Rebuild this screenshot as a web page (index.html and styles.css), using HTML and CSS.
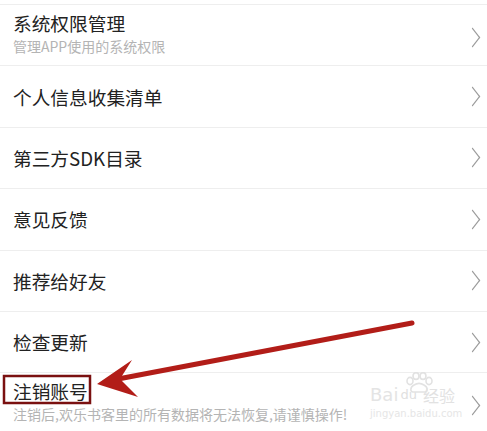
FILE: index.html
```html
<!DOCTYPE html>
<html>
<head>
    <meta charset="UTF-8">
    <title>设置</title>
    <link rel="stylesheet" href="styles.css">
</head>
<body>

<div class="page">

    <ul class="menu">
        <li class="item two">
            <div class="text">
                <p class="title">系统权限管理</p>
                <p class="sub">管理APP使用的系统权限</p>
            </div>
            <span class="arrow"></span>
        </li>
        <li class="item">
            <div class="text"><p class="title">个人信息收集清单</p></div>
            <span class="arrow"></span>
        </li>
        <li class="item">
            <div class="text"><p class="title">第三方SDK目录</p></div>
            <span class="arrow"></span>
        </li>
        <li class="item">
            <div class="text"><p class="title">意见反馈</p></div>
            <span class="arrow"></span>
        </li>
        <li class="item">
            <div class="text"><p class="title">推荐给好友</p></div>
            <span class="arrow"></span>
        </li>
        <li class="item">
            <div class="text"><p class="title">检查更新</p></div>
            <span class="arrow"></span>
        </li>
        <li class="item two last">
            <div class="text">
                <p class="title">注销账号</p>
                <p class="sub">注销后,欢乐书客里的所有数据将无法恢复,请谨慎操作!</p>
            </div>
            <span class="arrow"></span>
        </li>
    </ul>

    <!-- 水印 -->
    <div class="mark">
        <svg class="paw" width="30" height="22" viewBox="0 0 30 22">
            <g fill="none" stroke="#e2e2e2" stroke-width="1.6">
                <ellipse cx="6" cy="9" rx="3" ry="3.6"/>
                <ellipse cx="12" cy="4" rx="3" ry="3.4"/>
                <ellipse cx="19" cy="4" rx="3" ry="3.4"/>
                <ellipse cx="25" cy="9" rx="3" ry="3.6"/>
                <path d="M9 20 C6 20 6 15 10 13 C13 11 17 11 20 13 C24 15 24 20 21 20 Z"/>
            </g>
        </svg>
        <div class="mark-line"><span class="bai">Bai</span><span class="du">du</span><span class="jy">经验</span></div>
        <div class="mark-url">jingyan.baidu.com</div>
    </div>

    <!-- 标注 -->
    <svg class="note" width="487" height="431" viewBox="0 0 487 431">
        <rect x="4" y="376" width="86" height="27" fill="none" stroke="#7a1010" stroke-width="2.5"/>
        <line x1="412" y1="323" x2="118" y2="379" stroke="#b21d18" stroke-width="5" stroke-linecap="round"/>
        <polygon points="97,384 132,360 120,379 138,397" fill="#b21d18"/>
    </svg>

</div>

</body>
</html>
```

FILE: styles.css
```css
* {
    margin: 0;
    padding: 0;
}

body {
    font-family: "Noto Sans CJK SC", "Noto Sans", sans-serif;
    background: #fff;
    overflow: hidden;
}

.page {
    position: relative;
    width: 487px;
    height: 431px;
    padding-top: 4px;
    box-sizing: border-box;
}

.menu {
    list-style: none;
    border-top: 1px solid #eeeeee;
}

.item {
    display: flex;
    align-items: center;
    height: 60.4px;
    padding: 0 8px 0 13px;
    border-bottom: 1px solid #eeeeee;
}

.item.two {
    align-items: flex-start;
}

.item.two .text {
    padding-top: 5px;
}

.item.last {
    border-bottom: none;
}

.text {
    flex: 1;
}

.title {
    font-size: 18.7px;
    line-height: 26px;
    color: #222;
}

.sub {
    font-size: 14px;
    line-height: 20px;
    color: #b4b4b4;
}

.arrow {
    width: 10px;
    height: 10px;
    margin-right: 1px;
    border-top: 1.5px solid #9a9a9a;
    border-right: 1.5px solid #9a9a9a;
    transform: scaleY(1.28) rotate(45deg);
}

.item.two .arrow {
    align-self: center;
    margin-top: 4px;
}

.mark {
    position: absolute;
    left: 370px;
    top: 378px;
    width: 92px;
    font-family: "DejaVu Sans", sans-serif;
    color: #e6e6e6;
}

.paw {
    position: absolute;
    left: 34px;
    top: -6px;
}

.mark-line {
    display: flex;
    align-items: flex-end;
    margin-top: 8px;
    height: 18px;
    font-size: 18px;
    line-height: 18px;
}

.bai {
    color: #e4e4e4;
}

.du {
    margin-left: 2px;
    font-size: 13px;
    color: #e0e0e0;
}

.jy {
    margin-left: 6px;
    font-family: "Noto Sans CJK SC", sans-serif;
    font-size: 16px;
    color: #e2e2e2;
}

.mark-url {
    margin-top: 4px;
    font-size: 10px;
    color: #e6e6e6;
}

.note {
    position: absolute;
    left: 0;
    top: 0;
}
```
